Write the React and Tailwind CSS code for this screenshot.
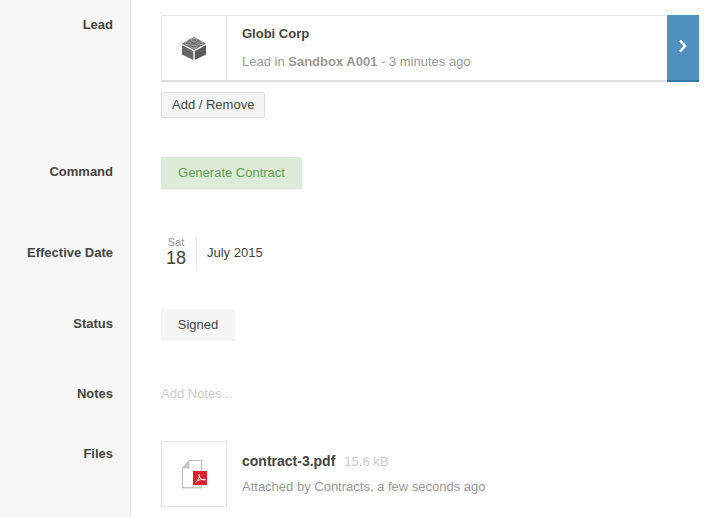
function Row({ label, labelTop, top, children, className = "" }) {
  return (
    <div className="flex">
      <div
        className="w-[131px] shrink-0 bg-[#f7f7f7] border-r border-[#e6e6e6] pr-[17px] text-right text-[13px] leading-[18px] font-bold text-[#444]"
        style={{ paddingTop: labelTop }}
      >
        {label}
      </div>
      <div className={"flex-1 pl-[30px] pr-[27px] " + className} style={{ paddingTop: top }}>
        {children}
      </div>
    </div>
  );
}

function Stud({ cx, cy }) {
  return <ellipse cx={cx} cy={cy} rx="3" ry="1.500" fill="#6e6e6e" stroke="#c4c4c4" strokeWidth="0.700" />;
}

function LegoIcon() {
  return (
    <svg width="24" height="23" viewBox="0 0 24 23">
      {/* top face */}
      <path d="M12 0 24 6.500 12 13 0 6.500z" fill="#6e6e6e" />
      <Stud cx="12" cy="3" />
      <Stud cx="6" cy="6.300" />
      <Stud cx="18" cy="6.300" />
      <Stud cx="12" cy="9.600" />
      {/* side faces */}
      <path d="M0 8 11.300 14.200V23L0 17.500z" fill="#666" />
      <path d="M24 8 12.700 14.200V23L24 17.500z" fill="#5c5c5c" />
    </svg>
  );
}

function PdfIcon() {
  return (
    <svg width="26" height="30" viewBox="0 0 26 30">
      <path d="M1.500 9 8 1.500h12.500v27h-19z" fill="#fff" stroke="#bdbdbd" strokeWidth="1" />
      <path d="M1 9.500 8.500 1v8.500z" fill="#c6c6c6" />
      <path d="M1 28h20v1.500H1z" fill="#c8c8c8" />
      <rect x="12" y="12" width="14" height="14" fill="#e2202c" />
      <path
        d="M14.500 23.500c1.800-1 3.300-3.400 4.200-7.300.2-.9-.8-1-.8 0 0 2.200 2 4.500 5.800 4.900.9.100.9-.8 0-.8-3-.1-6 .6-8.300 2.100"
        fill="none"
        stroke="#fff"
        strokeWidth="1"
      />
    </svg>
  );
}

export default function App() {
  return (
    <div className="w-[726px] h-[517px] overflow-hidden bg-white font-['Liberation_Sans',Arial,sans-serif] text-[13px] text-[#444]">
      {/* Lead */}
      <Row label="Lead" labelTop={16} top={15}>
        <div className="flex h-[67px] border border-[#e8e8e8] border-b-2 border-b-[#dddddd]">
          <div className="w-[65px] flex items-center justify-center border-r border-[#e8e8e8]">
            <LegoIcon />
          </div>
          <div className="flex-1 pl-[15px]">
            <div className="mt-[9px] font-bold leading-[18px]">Globi Corp</div>
            <div className="mt-[10px] leading-[18px] text-[#999]">
              Lead in <b>Sandbox A001</b> - 3 minutes ago
            </div>
          </div>
          <div className="w-[32px] -my-px -mr-px -mb-[2px] pb-[3px] flex items-center justify-center bg-[#5091bf] border-b-2 border-[#3878a4]">
            <svg width="10" height="14" viewBox="0 0 10 14">
              <path d="M2 1.500 7 7l-5 5.500" fill="none" stroke="#fff" strokeWidth="2.600" />
            </svg>
          </div>
        </div>
        <button className="block mt-[10px] h-[26px] px-[10px] bg-[#f5f5f5] border border-[#dddddd] rounded-[2px] text-[13px] text-[#444]">
          Add / Remove
        </button>
      </Row>

      {/* Command */}
      <Row label="Command" labelTop={45} top={39}>
        <button className="block h-[32px] w-[141px] bg-[#ddebd9] text-[13px] text-[#5f9e55]">
          Generate Contract
        </button>
      </Row>

      {/* Effective Date */}
      <Row label="Effective Date" labelTop={55} top={48}>
        <div className="flex h-[33px]">
          <div className="w-[30px] text-center mr-[5px]">
            <div className="text-[11px] leading-[11px] text-[#999]">Sat</div>
            <div className="text-[18px] leading-[21px] text-[#444]">18</div>
          </div>
          <div className="border-l border-[#e8e8e8] pl-[10px] pt-[7px] leading-[18px]">July 2015</div>
        </div>
      </Row>

      {/* Status */}
      <Row label="Status" labelTop={45} top={39}>
        <div className="w-[74px] h-[32px] bg-[#f5f5f5] flex items-center justify-center">Signed</div>
      </Row>

      {/* Notes */}
      <Row label="Notes" labelTop={44} top={44}>
        <div className="leading-[18px] text-[#ccc]">Add Notes...</div>
      </Row>

      {/* Files */}
      <Row label="Files" labelTop={42} top={38} className="pb-[10px]">
        <div className="flex">
          <div className="w-[66px] h-[66px] border border-[#e6e6e6] flex items-center justify-center">
            <PdfIcon />
          </div>
          <div className="pl-[15px]">
            <div className="mt-[10px] leading-[20px]">
              <span className="text-[14px] font-bold">contract-3.pdf</span>
              <span className="ml-[9px] text-[#ccc]">15.6 kB</span>
            </div>
            <div className="mt-[6px] leading-[18px] text-[#999]">Attached by Contracts, a few seconds ago</div>
          </div>
        </div>
      </Row>
    </div>
  );
}
